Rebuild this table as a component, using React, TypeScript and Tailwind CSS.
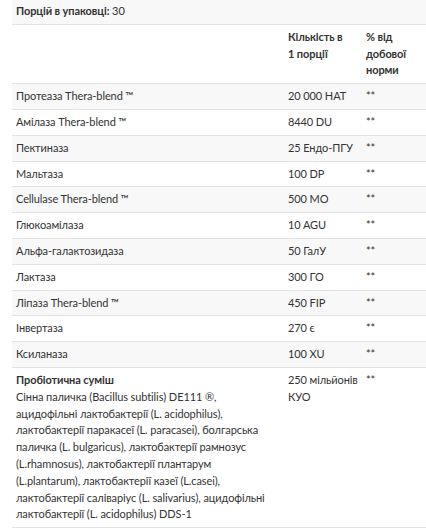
import React from "react";

const rows: [string, string][] = [
  ["Протеаза Thera-blend ™", "20 000 HAT"],
  ["Амілаза Thera-blend ™", "8440 DU"],
  ["Пектиназа", "25 Ендо-ПГУ"],
  ["Мальтаза", "100 DP"],
  ["Cellulase Thera-blend ™", "500 MO"],
  ["Глюкоамілаза", "10 AGU"],
  ["Альфа-галактозидаза", "50 ГалУ"],
  ["Лактаза", "300 ГО"],
  ["Ліпаза Thera-blend ™", "450 FIP"],
  ["Інвертаза", "270 є"],
  ["Ксиланаза", "100 XU"],
];

const probioLines = [
  "Сінна паличка (Bacillus subtilis) DE111 ®,",
  "ацидофільні лактобактерії (L. acidophilus),",
  "лактобактерії паракасеї (L. paracasei), болгарська",
  "паличка (L. bulgaricus), лактобактерії рамнозус",
  "(L.rhamnosus), лактобактерії плантарум",
  "(L.plantarum), лактобактерії казеї (L.casei),",
  "лактобактерії саліваріус (L. salivarius), ацидофільні",
  "лактобактерії (L. acidophilus) DDS-1",
];

export default function App() {
  return (
    <div className="bg-white w-[426px] min-h-[529px] pl-3 text-[11px] leading-[16.8px] tracking-[-0.1px] text-[#333] font-['Lato','Noto_Sans',sans-serif]">
      <table className="w-[414px] border-collapse table-fixed">
        <colgroup>
          <col className="w-[272px]" />
          <col className="w-[78px]" />
          <col className="w-[64px]" />
        </colgroup>
        <tbody>
          <tr className="bg-[#f8f8f8] border-b border-[#e3e3e3]">
            <td colSpan={3} className="px-1 pt-[3px] pb-1 align-top">
              <span className="font-bold">Порцій в упаковці:</span> 30
            </td>
          </tr>
          <tr className="border-b border-[#e3e3e3]">
            <td className="px-1 py-1"></td>
            <td className="px-1 py-1 align-top font-bold">Кількість в<br />1 порції</td>
            <td className="px-1 py-1 align-top font-bold">% від добової норми</td>
          </tr>
          {rows.map(([name, amt], i) => (
            <tr key={name} className={(i % 2 === 0 ? "bg-[#f8f8f8] " : "") + "border-b border-[#e3e3e3]"}>
              <td className="px-1 py-1 align-top">{name}</td>
              <td className="px-1 py-1 align-top whitespace-nowrap">{amt}</td>
              <td className="px-1 py-1 align-top">**</td>
            </tr>
          ))}
          <tr className="border-b border-[#e3e3e3]">
            <td className="px-1 py-1 align-top">
              <div className="font-bold">Пробіотична суміш</div>
              <div>
                {probioLines.map((l, i) => (
                  <React.Fragment key={i}>
                    {l}
                    {i < probioLines.length - 1 && <br />}
                  </React.Fragment>
                ))}
              </div>
            </td>
            <td className="px-1 py-1 align-top">250 мільйонів<br />КУО</td>
            <td className="px-1 py-1 align-top">**</td>
          </tr>
        </tbody>
      </table>
    </div>
  );
}
